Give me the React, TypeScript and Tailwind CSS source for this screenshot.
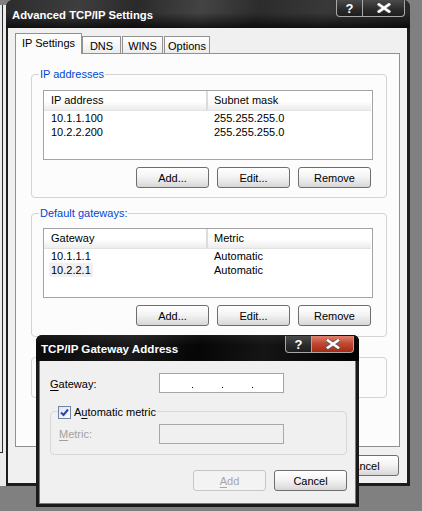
import React from 'react'

const ipRows = [
  ['10.1.1.100', '255.255.255.0'],
  ['10.2.2.200', '255.255.255.0'],
]

const gatewayRows = [
  ['10.1.1.1', 'Automatic'],
  ['10.2.2.1', 'Automatic'],
]

function Btn({ children, disabled = false }: { children: React.ReactNode; disabled?: boolean }) {
  return (
    <div
      className={`w-[73px] h-[21px] flex items-center justify-center rounded-[3px] border text-[11px] leading-none pt-[1px] ${
        disabled
          ? 'border-[#c6c6c6] text-[#a6a6a6] bg-[#f3f3f3]'
          : 'border-[#6e6e6e] text-black bg-[linear-gradient(to_bottom,#ffffff,#f4f4f4_45%,#e2e2e2_80%,#d6d6d6)]'
      }`}
    >
      {children}
    </div>
  )
}

function Group({ label, className = '', labelBg = 'bg-[#fcfcfc]', children }: { label?: React.ReactNode; className?: string; labelBg?: string; children?: React.ReactNode }) {
  return (
    <div className={`relative rounded-[4px] border border-[#d3d3d3] ${className}`}>
      {label && (
        <span className={`absolute -top-[8px] left-[7px] px-[1px] text-[11px] leading-[14px] text-[#0046d5] ${labelBg}`}>{label}</span>
      )}
      {children}
    </div>
  )
}

function ListView({ cols, rows, highlight }: { cols: string[]; rows: string[][]; highlight?: number }) {
  return (
    <div className="w-[330px] h-[70px] border border-[#a3a3a3] bg-white">
      <div className="flex h-[20px] bg-[linear-gradient(to_bottom,#ffffff,#ffffff_55%,#ececec)] border-b border-[#e2e2e2] mr-[1px] text-[11px]">
        <div className="w-[164px] flex items-center pl-[7px] border-r-2 border-[#dcdcdc]">{cols[0]}</div>
        <div className="flex-1 flex items-center pl-[6px]">{cols[1]}</div>
      </div>
      {rows.map((r, i) => (
        <div key={i} className="flex h-[14px] items-center text-[11px] leading-none">
          <div className="w-[164px] pl-[5px]">
            <span className={`px-[2px] py-[1px] ${highlight === i ? 'bg-[#f0f0f0]' : ''}`}>{r[0]}</span>
          </div>
          <div className="flex-1 pl-[6px]">{r[1]}</div>
        </div>
      ))}
    </div>
  )
}

function CloseGlyph() {
  return (
    <svg width="14" height="10" viewBox="0 0 14 10">
      <path d="M2 1.5 L12 8.5 M12 1.5 L2 8.5" stroke="#5a5a5a" strokeWidth="4.2" strokeLinecap="square" />
      <path d="M2 1.5 L12 8.5 M12 1.5 L2 8.5" stroke="#ffffff" strokeWidth="2.6" strokeLinecap="square" />
    </svg>
  )
}

function CaptionButtons({ red = false }: { red?: boolean }) {
  return (
    <div className="flex">
      <div className="w-[27px] h-[17px] flex items-center justify-center rounded-bl-[4px] border border-t-0 border-[#a8a8a8] bg-[linear-gradient(to_bottom,#4a4a4a,#2a2a2a_60%,#1e1e1e)] text-white font-bold text-[13px] leading-none">
        ?
      </div>
      <div
        className={`w-[42px] h-[17px] flex items-center justify-center rounded-br-[4px] border border-l-0 border-t-0 border-[#a8a8a8] ${
          red ? 'bg-[linear-gradient(to_bottom,#e08070,#c24a34_45%,#a52a14)]' : 'bg-[linear-gradient(to_bottom,#4a4a4a,#2a2a2a_60%,#1e1e1e)]'
        }`}
      >
        <CloseGlyph />
      </div>
    </div>
  )
}

function Tab({ label, active = false, w }: { label: string; active?: boolean; w: string }) {
  return (
    <div
      className={`${w} flex items-center justify-center border border-b-0 border-[#919191] text-[11px] leading-none ${
        active ? 'h-[21px] bg-[#fcfcfc] relative z-10 -mb-[1px] pb-[1px]' : 'h-[17px] bg-[linear-gradient(to_bottom,#ffffff,#ececec)] pt-[2px]'
      }`}
    >
      {label}
    </div>
  )
}

export default function App() {
  return (
    <div className="relative w-[422px] h-[511px] overflow-hidden bg-[#808080] font-['Liberation_Sans',Arial,sans-serif] text-black">
      {/* windows behind, at the far left */}
      <div className="absolute left-0 top-[5px] w-[8px] h-[481px] bg-[#ebebeb]">
        <div className="w-[3px] h-[448px] border-r border-b border-[#2a2a2a]" />
      </div>

      {/* Advanced TCP/IP Settings */}
      <div className="absolute left-[6px] top-0 w-[404px] h-[486px] flex flex-col rounded-t-[7px] overflow-hidden bg-[#1c1c1c]">
        <div className="h-[28px] flex justify-between pl-[6px] pr-[5px] bg-[linear-gradient(to_bottom,rgba(0,0,0,0),rgba(0,0,0,0)_45%,rgba(0,0,0,0.7)),linear-gradient(105deg,#2c2c2c,#3e3e3e_18%,#2a2a2a_32%,#444444_48%,#2c2c2c_62%,#383838_78%,#262626)]">
          <span className="self-center text-white font-bold text-[11.3px] pt-[3px]">Advanced TCP/IP Settings</span>
          <CaptionButtons />
        </div>
        <div className="flex-1 ml-[2px] mr-[3px] mb-[3px] bg-[#f0f0f0] flex flex-col px-[7px] pt-[5px]">
          <div className="flex items-end">
            <Tab label="IP Settings" active w="w-[67px]" />
            <Tab label="DNS" w="w-[39px]" />
            <div className="w-[1px]" />
            <Tab label="WINS" w="w-[41px]" />
            <div className="w-[1px]" />
            <Tab label="Options" w="w-[46px]" />
          </div>
          <div className="w-[385px] h-[394px] border border-[#919191] bg-[#fcfcfc] pl-[15px] pt-[20px] flex flex-col">
            <Group label="IP addresses" className="w-[356px] h-[124px] pl-[11px] pt-[15px]">
              <ListView cols={['IP address', 'Subnet mask']} rows={ipRows} />
              <div className="flex justify-end gap-[8px] mt-[7px] pr-[15px]">
                <Btn>Add...</Btn>
                <Btn>Edit...</Btn>
                <Btn>Remove</Btn>
              </div>
            </Group>
            <Group label="Default gateways:" className="w-[356px] h-[124px] mt-[15px] pl-[11px] pt-[14px]">
              <ListView cols={['Gateway', 'Metric']} rows={gatewayRows} highlight={1} />
              <div className="flex justify-end gap-[8px] mt-[7px] pr-[15px]">
                <Btn>Add...</Btn>
                <Btn>Edit...</Btn>
                <Btn>Remove</Btn>
              </div>
            </Group>
            <Group className="w-[356px] h-[41px] mt-[20px]" />
          </div>
          <div className="flex justify-end gap-[8px] mt-[8px] pr-[1px]">
            <Btn>OK</Btn>
            <Btn>Cancel</Btn>
          </div>
        </div>
      </div>

      {/* TCP/IP Gateway Address */}
      <div className="absolute left-[36px] top-[335px] w-[323px] h-[172px] flex flex-col rounded-t-[6px] overflow-hidden bg-[#1a1a1a]">
        <div className="h-[26px] flex justify-between pl-[5px] pr-[5px] pt-[1px] bg-[linear-gradient(to_bottom,rgba(255,255,255,0.06),rgba(0,0,0,0)_40%),linear-gradient(105deg,#0a0a0a,#1a1a1a_30%,#050505_50%,#151515_70%,#000000)]">
          <span className="self-center text-white font-bold text-[11.6px] pt-[1px]">TCP/IP Gateway Address</span>
          <CaptionButtons red />
        </div>
        <div className="flex-1 mx-[3px] mb-[3px] border border-t-0 border-[#7a7a7a] bg-[#f0f0f0] pl-[10px] pr-[8px] pt-[12px] flex flex-col">
          <div className="flex items-center h-[20px] text-[11px]">
            <span className="w-[109px] pt-[2px]">
              <u className="underline-offset-2">G</u>ateway:
            </span>
            <div className="w-[125px] h-[20px] border border-[#a5a5a5] bg-white flex items-end pb-[4px]">
              <span className="w-[1px] h-[1px] bg-black ml-[32px]" />
              <span className="w-[1px] h-[1px] bg-black ml-[29px]" />
              <span className="w-[1px] h-[1px] bg-black ml-[29px]" />
            </div>
          </div>
          <Group
            labelBg="bg-[#f0f0f0]"
            className="w-[297px] h-[44px] mt-[18px] pl-[8px] pt-[12px] border-[#d8d8d8]"
            label={
              <span className="flex items-center gap-[3px] text-black -ml-[1px] pt-[1px]">
                <span className="w-[13px] h-[13px] border border-[#6f82a8] bg-[linear-gradient(to_bottom_right,#dfe3ea,#ffffff)] flex items-center justify-center">
                  <svg width="9" height="9" viewBox="0 0 9 9">
                    <path d="M1 4.5 L3.5 7 L8 1.5" fill="none" stroke="#2b44a8" strokeWidth="2" />
                  </svg>
                </span>
                <span>
                  A<u className="underline-offset-2">u</u>tomatic metric
                </span>
              </span>
            }
          >
            <div className="flex items-center h-[20px] text-[11px]">
              <span className="w-[100px] text-[#a0a0a0] pt-[1px]">
                <u className="underline-offset-2">M</u>etric:
              </span>
              <div className="w-[125px] h-[20px] border border-[#a8a8a8] bg-[#f0f0f0]" />
            </div>
          </Group>
          <div className="flex justify-end gap-[8px] mt-[15px]">
            <Btn disabled>
              <u className="underline-offset-2">A</u>dd
            </Btn>
            <Btn>Cancel</Btn>
          </div>
        </div>
      </div>
    </div>
  )
}
